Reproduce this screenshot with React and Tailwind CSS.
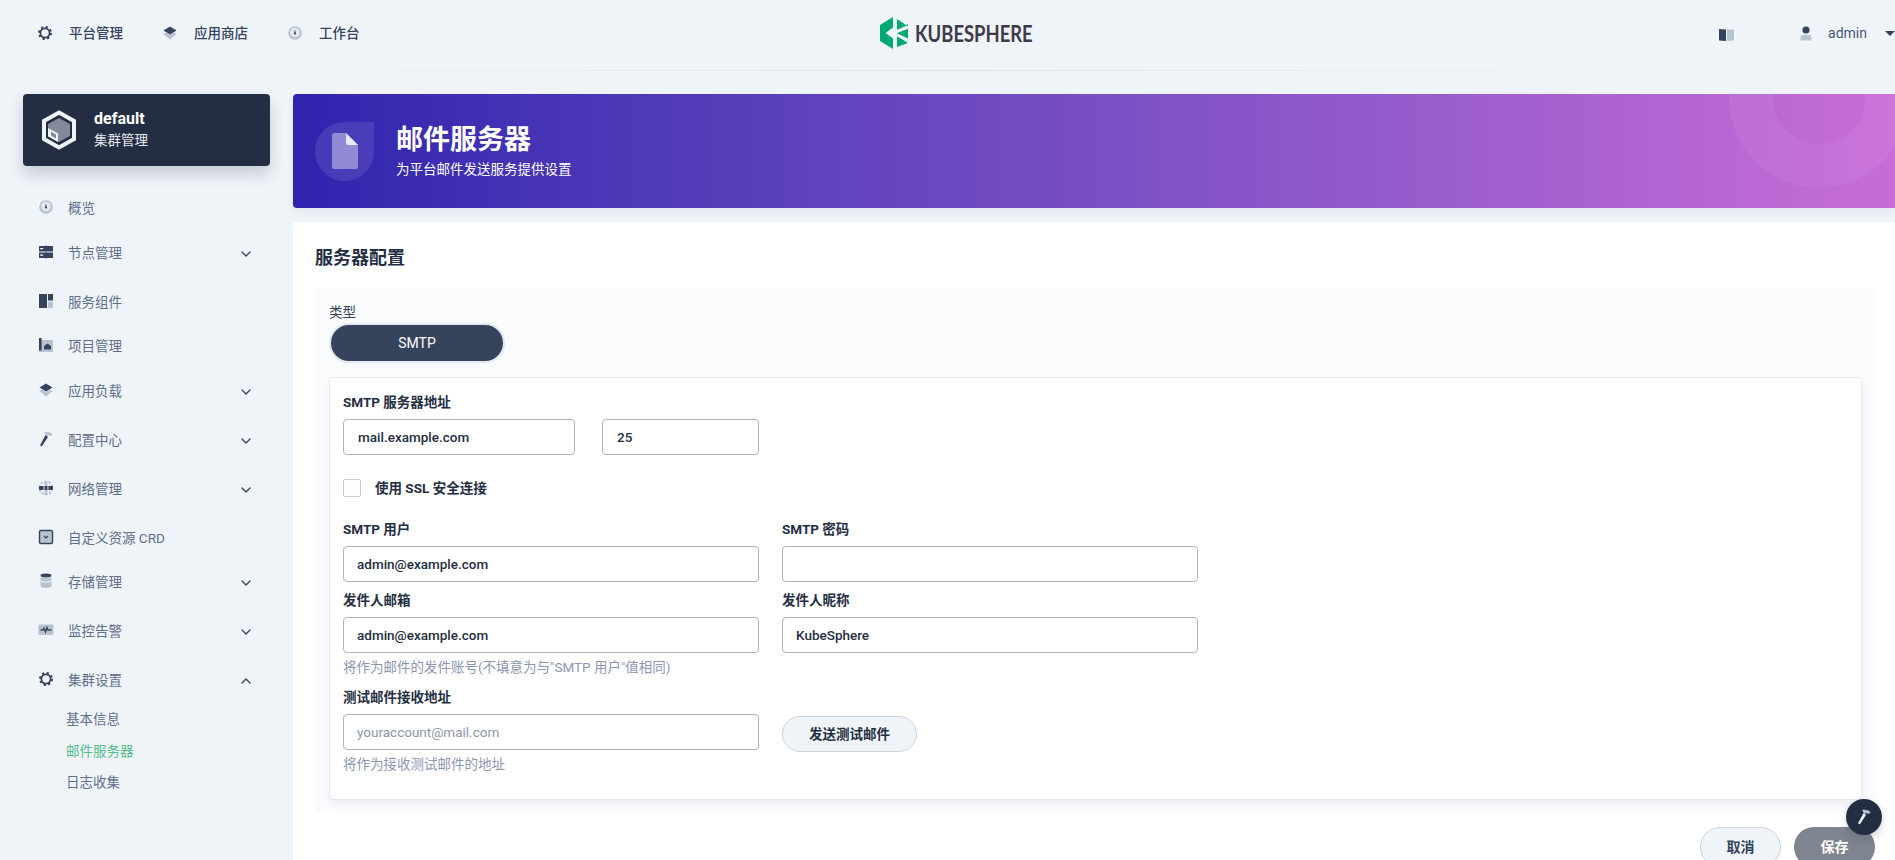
import React from 'react';
import { ChevronDown, ChevronUp } from 'lucide-react';

const DARK = '#36435c';
const LIGHT = '#b7c3d0';

// KubeSphere style duotone icons, all on a 20x20 box
const GearIcon = () => (
    <svg width="20" height="20" viewBox="0 0 20 20" fill="none">
        <circle cx="10" cy="10" r="4.6" stroke={DARK} strokeWidth="1.8" />
        <circle cx="10" cy="10" r="6" stroke={DARK} strokeWidth="2" strokeDasharray="2.2 2.51" />
    </svg>
);
const StackIcon = () => (
    <svg width="20" height="20" viewBox="0 0 20 20">
        <path d="M3.5 11 L6 9.5 L10 12 L14 9.500 L16.5 11 L10 16.500Z" fill={LIGHT} />
        <path d="M3.5 7.500 L10 3.500 L16.5 7.500 L10 11.500Z" fill={DARK} />
    </svg>
);
const GaugeIcon = () => (
    <svg width="20" height="20" viewBox="0 0 20 20">
        <circle cx="10" cy="10" r="6.800" fill={LIGHT} />
        <circle cx="10" cy="9.500" r="4.800" fill="#e4eaf0" />
        <path d="M9.200 10.500 L10 6 L10.800 10.500Z" fill={DARK} />
        <circle cx="10" cy="10.500" r="1.100" fill={DARK} />
    </svg>
);
const NodeIcon = () => (
    <svg width="20" height="20" viewBox="0 0 20 20">
        <rect x="9" y="3" width="2" height="14" fill={LIGHT} />
        <rect x="3" y="4" width="14" height="5.500" rx="0.500" fill={DARK} />
        <rect x="3" y="10.500" width="14" height="5.500" rx="0.500" fill={DARK} />
        <rect x="4.200" y="6" width="3" height="1.200" fill="#fff" />
        <rect x="4.200" y="12.500" width="3" height="1.200" fill="#fff" />
    </svg>
);
const PanelIcon = () => (
    <svg width="20" height="20" viewBox="0 0 20 20">
        <rect x="3" y="3" width="8" height="14" fill={DARK} />
        <rect x="12" y="3" width="5" height="6.500" fill={DARK} />
        <rect x="12" y="10.500" width="5" height="6.500" fill={LIGHT} />
    </svg>
);
const ProjectIcon = () => (
    <svg width="20" height="20" viewBox="0 0 20 20">
        <rect x="3" y="5" width="14" height="12" rx="1" fill={LIGHT} />
        <rect x="3" y="3" width="2.600" height="12.500" fill={DARK} />
        <path d="M8 14.500 V11 L11.500 8.500 L15 11 V14.500Z" fill={DARK} />
    </svg>
);
const HammerIcon = ({ head = LIGHT, handle = DARK }) => (
    <svg width="20" height="20" viewBox="0 0 20 20">
        <path d="M8 3 C11 2.400 14 3 16.500 5 L15 7 C13.800 6.200 12.800 6 12 6.200 L10.500 7 Z" fill={head} />
        <path d="M9.600 6 L12 8 L6 17 C5.200 17.600 4 16.800 4.300 15.800Z" fill={handle} />
    </svg>
);
const GlobeIcon = () => (
    <svg width="20" height="20" viewBox="0 0 20 20">
        <circle cx="10" cy="10" r="6.500" fill="none" stroke={LIGHT} strokeWidth="1.600" strokeDasharray="3 1" />
        <rect x="8.500" y="3.500" width="3" height="13" fill={LIGHT} />
        <rect x="3" y="8" width="14" height="4" rx="1" fill={DARK} />
        <rect x="7.600" y="8" width="0.900" height="4" fill="#eff4f9" />
        <rect x="11.500" y="8" width="0.900" height="4" fill="#eff4f9" />
    </svg>
);
const CrdIcon = () => (
    <svg width="20" height="20" viewBox="0 0 20 20" fill="none">
        <rect x="3.500" y="3.500" width="13" height="13" rx="1.500" fill={LIGHT} stroke={DARK} strokeWidth="1.400" />
        <path d="M8 9 L10 11 L12 9" stroke={DARK} strokeWidth="1.200" />
    </svg>
);
const StorageIcon = () => (
    <svg width="20" height="20" viewBox="0 0 20 20">
        <path d="M4.500 10.500 C6 12 14 12 15.500 10.500 V15 C15.500 17.500 4.500 17.500 4.500 15Z" fill={LIGHT} />
        <path d="M4.500 6 C6 7.500 14 7.500 15.500 6 V9.500 C14 11 6 11 4.500 9.500Z" fill={LIGHT} />
        <ellipse cx="10" cy="4.500" rx="5.500" ry="1.900" fill={DARK} />
    </svg>
);
const MonitorIcon = () => (
    <svg width="20" height="20" viewBox="0 0 20 20" fill="none">
        <rect x="2.500" y="4.500" width="15" height="10.500" rx="1" fill={LIGHT} />
        <path d="M4.500 10 H7 L8 8 L9.500 12 L11 7.500 L12 10 H15.500" stroke={DARK} strokeWidth="1.300" />
    </svg>
);
const BookIcon = () => (
    <svg width="18" height="18" viewBox="0 0 18 18">
        <path d="M2 4 L9 4.500 V16 L2 15.500Z" fill={DARK} />
        <path d="M10 4.500 H17 V15.500 L10 16Z" fill={LIGHT} />
    </svg>
);
const UserIcon = () => (
    <svg width="16" height="20" viewBox="0 0 16 20">
        <circle cx="8" cy="6" r="3.600" fill={DARK} />
        <path d="M2.500 16.500 V13.500 C2.500 11.500 4 10.700 8 10.700 C12 10.700 13.500 11.500 13.500 13.500 V16.500Z" fill={LIGHT} />
    </svg>
);

const navItems = [
    { label: '概览', icon: GaugeIcon },
    { label: '节点管理', icon: NodeIcon, more: true },
    { label: '服务组件', icon: PanelIcon },
    { label: '项目管理', icon: ProjectIcon },
    { label: '应用负载', icon: StackIcon, more: true },
    { label: '配置中心', icon: HammerIcon, more: true },
    { label: '网络管理', icon: GlobeIcon, more: true },
    { label: '自定义资源 CRD', icon: CrdIcon },
    { label: '存储管理', icon: StorageIcon, more: true },
    { label: '监控告警', icon: MonitorIcon, more: true },
];

const TopLink = ({ icon: Icon, label, className }) => (
    <div className={`flex items-center ${className}`}>
        <Icon />
        <span className="ml-[14px] text-[13.5px] font-medium text-[#36435c]">{label}</span>
    </div>
);

const TopBar = () => (
    <header className="h-[71px] relative flex items-start shrink-0 pt-[23px] pl-[35px]">
        <TopLink icon={GearIcon} label="平台管理" />
        <TopLink icon={StackIcon} label="应用商店" className="ml-[37px]" />
        <TopLink icon={GaugeIcon} label="工作台" className="ml-[37px]" />
        {/* centered logo sits over the bar */}
        <div className="absolute left-[879px] top-[16px] flex items-center">
            <svg width="30" height="34" viewBox="0 0 30 34">
                <path d="M14 1 V11.500 L6.500 17 L14 22.500 V33 L1 25 V9Z" fill="#00a971" />
                <path d="M18 3 L27 9 L18 14Z" fill="#00a971" />
                <path d="M18 20 L29 27 L18 31Z" fill="#00a971" />
                <path d="M16 15 L29 8 V25 L16 19 L12 17Z" fill="#00a971" />
                <path d="M29 11 L14 17 L29 24" fill="none" stroke="#eff4f9" strokeWidth="3" />
            </svg>
            <span className="ml-[6px] origin-left scale-x-[0.8] font-['Lato',sans-serif] text-[23px] font-bold leading-none text-[#3e3a4a]">KUBESPHERE</span>
        </div>
        <div className="ml-auto flex items-center">
            <BookIcon />
            <div className="ml-[63px]"><UserIcon /></div>
            <span className="ml-[14px] text-[14px] text-[#4a5974]">admin</span>
            <span className="ml-[18px] h-0 w-0 border-x-[5px] border-t-[5px] border-x-transparent border-t-[#36435c]" />
        </div>
        <div className="absolute left-[150px] right-[150px] bottom-0 h-px bg-gradient-to-r from-transparent via-[#dfe4ea] to-transparent" />
    </header>
);

const Sidebar = () => (
    <aside className="w-[293px] shrink-0 pt-[23px] pl-[23px]">
        <div className="w-[247px] h-[72px] rounded-[4px] bg-[#242e42] shadow-[0_8px_16px_0_rgba(36,46,66,0.2)] flex items-center pl-[18px]">
            <svg width="36" height="40" viewBox="0 0 36 40">
                <path d="M18 2.500 L33 11 V29 L18 37.500 L3 29 V11Z" fill="none" stroke="#eff4f9" strokeWidth="4" />
                <path d="M18 8 L29 14 V26 L18 32 L7 26 V14Z" fill="#84899b" />
                <path d="M7 18 L17 23.500 V32 L7 26.500Z" fill="#eff4f9" />
                <path d="M10 21.500 L15 24.500 V28.500 L10 25.500Z" fill="#84899b" />
            </svg>
            <div className="ml-[17px]">
                <div className="text-[16px] leading-[20px] font-bold text-white">default</div>
                <div className="text-[13.5px] leading-[22px] text-[#e4e8ee]">集群管理</div>
            </div>
        </div>
        <nav className="mt-[32px]">
            {navItems.map(({ label, icon: Icon, more }) => (
                <div key={label} className={`flex items-start pl-[13px] pr-[36px] ${more ? 'h-[49px]' : 'h-[44.5px]'}`}>
                    <div className="-mt-[1px]"><Icon /></div>
                    <span className="ml-[12px] text-[13.5px] leading-[20px] text-[#5f6f8a]">{label}</span>
                    {more && <ChevronDown size={16} strokeWidth={2} className="ml-auto mt-[3px] mr-[3px] text-[#36435c]" />}
                </div>
            ))}
            <div className="flex items-start pl-[13px] pr-[36px] h-[39px]">
                <div className="-mt-[1px]"><GearIcon /></div>
                <span className="ml-[12px] text-[13.5px] leading-[20px] text-[#5f6f8a]">集群设置</span>
                <ChevronUp size={16} strokeWidth={2} className="ml-auto mt-[3px] mr-[3px] text-[#36435c]" />
            </div>
            <div className="pl-[43px] text-[13.5px] leading-[20px] text-[#5f6f8a]">
                <div className="h-[32px]">基本信息</div>
                <div className="h-[31px] text-[#55bc8a]">邮件服务器</div>
                <div>日志收集</div>
            </div>
        </nav>
    </aside>
);

const Banner = () => (
    <div className="relative h-[114px] shrink-0 overflow-hidden rounded-l-[4px] bg-gradient-to-r from-[#3023ae] to-[#c86dd7] shadow-[0_4px_8px_0_rgba(36,46,66,0.06)] flex items-center pl-[22px]">
        <div className="absolute left-[1436px] -top-[86px] w-[180px] h-[180px] rounded-full border-[44px] border-white/[0.05]" />
        <div className="relative w-[59px] h-[59px] rounded-l-full rounded-br-full bg-white/10 flex items-center justify-center">
            <svg width="26" height="36" viewBox="0 0 26 36">
                <path d="M2 0 H14 L26 12 V34 A2 2 0 0 1 24 36 H2 A2 2 0 0 1 0 34 V2 A2 2 0 0 1 2 0Z" fill="#fff" fillOpacity="0.4" />
                <path d="M14 0 L26 12 H16 A2 2 0 0 1 14 10Z" fill="#fff" fillOpacity="0.8" />
            </svg>
        </div>
        <div className="relative ml-[22px]">
            <h1 className="text-[27px] leading-[30px] font-bold text-white">邮件服务器</h1>
            <p className="text-[13.5px] leading-[18px] mt-[5px] text-white">为平台邮件发送服务提供设置</p>
        </div>
    </div>
);

const Field = ({ label, value, placeholder, hint, className = '' }) => (
    <div className={className}>
        <label className="block text-[13.5px] leading-[14px] font-bold text-[#242e42]">{label}</label>
        <input
            readOnly
            value={value || ''}
            placeholder={placeholder}
            className="mt-[10px] block w-full h-[36px] rounded-[4px] border border-[#abb4c4] bg-white px-[13px] text-[13.5px] font-medium text-[#242e42] outline-none placeholder:font-normal placeholder:text-[#8d96a8]"
        />
        {hint && <p className="mt-[4px] mb-[2px] text-[13.5px] leading-[20px] text-[#8c96ad]">{hint}</p>}
    </div>
);

const MailForm = () => (
    <main className="flex-1 min-w-0 pt-[23px] flex flex-col">
        <Banner />
        <div className="mt-[14px] flex-1 bg-white rounded-tl-[4px] pl-[22px] pr-[19px] pt-[25px]">
            <h2 className="text-[18px] leading-[22px] font-bold text-[#242e42]">服务器配置</h2>
            <div className="mt-[19px] h-[524px] rounded-[4px] bg-[#f9fbfd] px-[14px] pt-[16px]">
                <div className="text-[13.5px] leading-[16px] text-[#36435c]">类型</div>
                <div className="mt-[3px] w-[176px] h-[40px] rounded-full bg-[#36435c] border-2 border-[#e3e9ef] flex items-center justify-center text-[14px] text-white">SMTP</div>
                <div className="mt-[14px] h-[423px] rounded-[4px] border border-[#e3e9ef] bg-white shadow-[0_4px_8px_0_rgba(36,46,66,0.06)] pl-[13px] pt-[17px]">
                    <label className="block text-[13.5px] leading-[14px] font-bold text-[#242e42]">SMTP 服务器地址</label>
                    <div className="mt-[10px] flex gap-[27px]">
                        <input readOnly value="mail.example.com" className="w-[232px] h-[36px] rounded-[4px] border border-[#abb4c4] px-[14px] text-[13.5px] font-medium text-[#242e42] outline-none" />
                        <input readOnly value="25" className="w-[157px] h-[36px] rounded-[4px] border border-[#abb4c4] px-[14px] text-[13.5px] font-medium text-[#242e42] outline-none" />
                    </div>
                    <div className="mt-[23px] flex items-center">
                        <span className="w-[18px] h-[18px] rounded-[2px] border border-[#c7ced9] bg-white" />
                        <span className="ml-[14px] text-[13.5px] font-bold text-[#242e42]">使用 SSL 安全连接</span>
                    </div>
                    <div className="mt-[24px] grid grid-cols-[416px_416px] gap-x-[23px] gap-y-[11px]">
                        <Field label="SMTP 用户" value="admin@example.com" />
                        <Field label="SMTP 密码" />
                        <Field label="发件人邮箱" value="admin@example.com" hint="将作为邮件的发件账号(不填意为与&quot;SMTP 用户&quot;值相同)" />
                        <Field label="发件人昵称" value="KubeSphere" />
                        <Field label="测试邮件接收地址" placeholder="youraccount@mail.com" hint="将作为接收测试邮件的地址" />
                        <div className="pt-[26px]">
                            <button className="w-[135px] h-[36px] rounded-full border border-[#ccd3db] bg-[#eff4f9] text-[13.5px] font-bold text-[#242e42]">发送测试邮件</button>
                        </div>
                    </div>
                </div>
            </div>
            <div className="mt-[15px] flex justify-end gap-[13px] pr-[1px]">
                <button className="w-[81px] h-[40px] rounded-full border border-[#ccd3db] bg-[#eff4f9] text-[14px] font-bold text-[#36435c]">取消</button>
                <button className="w-[81px] h-[40px] rounded-full bg-[#7f8491] text-[14px] font-bold text-white">保存</button>
            </div>
        </div>
    </main>
);

export default function App() {
    return (
        <div className="relative h-[860px] overflow-hidden bg-[#eff4f9] flex flex-col font-['Roboto','Noto_Sans_CJK_SC',sans-serif]">
            <TopBar />
            <div className="flex flex-1 min-h-0">
                <Sidebar />
                <MailForm />
            </div>
            {/* floating tool button */}
            <div className="absolute left-[1846px] top-[799px] w-[36px] h-[36px] rounded-full bg-[#242e42] shadow-[0_4px_8px_0_rgba(36,46,66,0.2)] flex items-center justify-center">
                <HammerIcon head="#b7c3d0" handle="#eff4f9" />
            </div>
        </div>
    );
}
